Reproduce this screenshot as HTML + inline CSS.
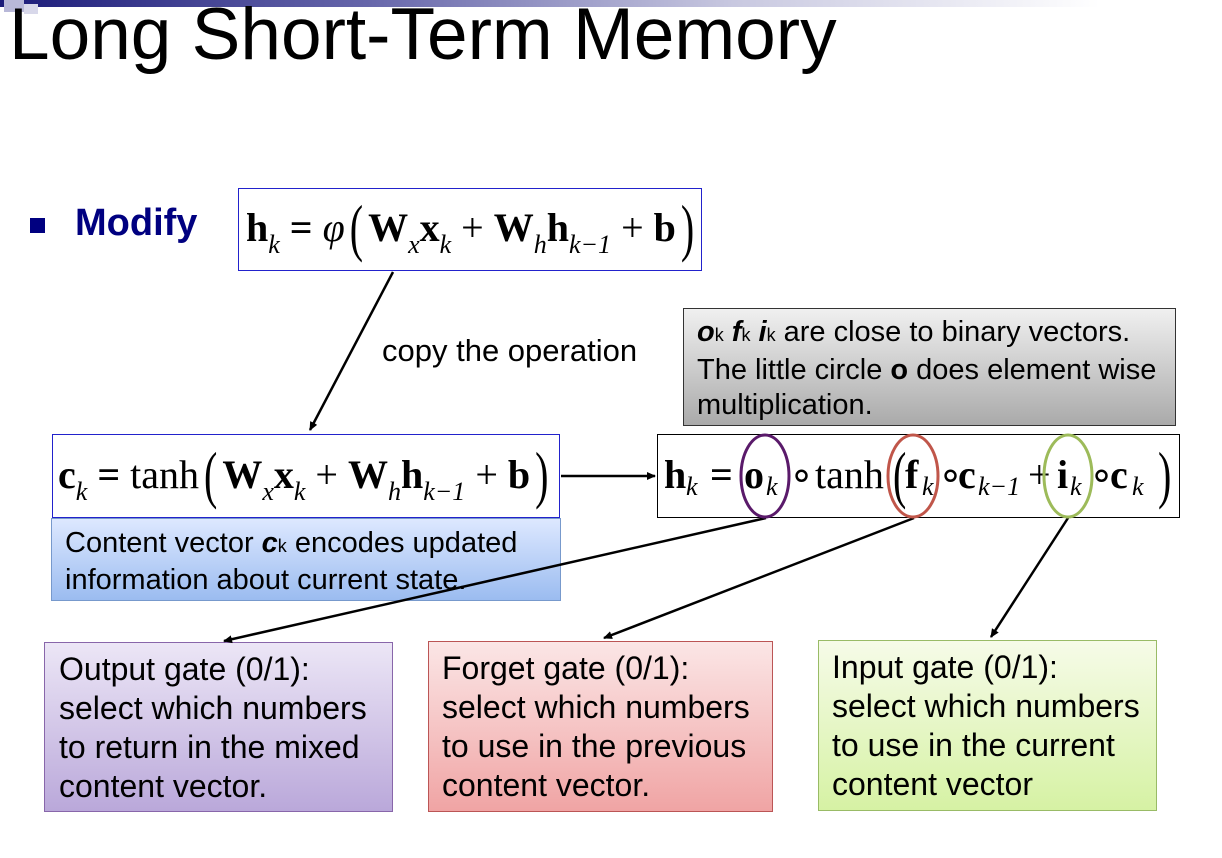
<!DOCTYPE html>
<html><head><meta charset="utf-8"><style>
body{margin:0;width:1222px;height:858px;background:#fff;position:relative;overflow:hidden;font-family:"Liberation Sans",sans-serif;}
.a{position:absolute;}
.box{position:absolute;box-sizing:border-box;}
.m{font-family:"Liberation Serif",serif;font-size:40px;white-space:nowrap;position:absolute;line-height:1;}
.m b{font-weight:bold;}
.m sub{font-style:italic;font-size:26px;vertical-align:-12px;}
.m .p{display:inline-block;transform:scaleY(1.6);font-size:40px;margin:0 5px;}
.q{position:absolute;font-family:"Liberation Serif",serif;font-size:40px;line-height:1;top:455px;white-space:nowrap;}
.q.s{font-style:italic;font-size:26px;top:474px;}
.q.pp{transform:scaleY(1.6);}
.t{font-size:32px;line-height:39px;color:#000;}
</style></head><body>
<div class="a" style="left:0;top:0;width:1222px;height:7px;background:linear-gradient(90deg,#1c1c7a 0%,#6666aa 30%,#c8c8e0 60%,#fff 90%);"></div>
<div class="a" style="left:4px;top:0;width:20px;height:12px;background:#b8b8d8;"></div>
<div class="a" style="left:24px;top:4px;width:14px;height:10px;background:#d8d8ea;"></div>
<div class="a" style="left:9px;top:-7px;font-size:73px;">Long Short-Term Memory</div>

<div class="a" style="left:30px;top:218px;width:15px;height:15px;background:#000080;"></div>
<div class="a" style="left:75px;top:202px;font-size:38px;font-weight:bold;color:#000080;">Modify</div>

<div class="box" style="left:238px;top:188px;width:464px;height:83px;border:1.5px solid #2222cc;"></div>
<div class="m" style="left:246px;top:208px;"><b>h</b><sub>k</sub> <b>=</b> <i>φ</i><span class="p">(</span><b>W</b><sub>x</sub><b>x</b><sub>k</sub> + <b>W</b><sub>h</sub><b>h</b><sub>k−1</sub> + <b>b</b><span class="p">)</span></div>

<div class="a t" style="left:382px;top:331px;font-size:31px;">copy the operation</div>

<div class="box" style="left:683px;top:308px;width:493px;height:118px;border:1.5px solid #333;background:linear-gradient(#f0f0f0,#aaa);padding:6px 0 0 13px;font-size:29px;line-height:35px;">
<b><i>o</i></b><span style="font-size:18px">k</span> <b><i>f</i></b><span style="font-size:18px">k</span> <b><i>i</i></b><span style="font-size:18px">k</span> are close to binary vectors.<br>The little circle <b>o</b> does element wise<br>multiplication.</div>

<div class="box" style="left:52px;top:434px;width:508px;height:84px;border:1.5px solid #2222cc;"></div>
<div class="m" style="left:58px;top:455px;"><b>c</b><sub>k</sub> <b>=</b> tanh<span class="p">(</span><b>W</b><sub>x</sub><b>x</b><sub>k</sub> + <b>W</b><sub>h</sub><b>h</b><sub>k−1</sub> + <b>b</b><span class="p">)</span></div>
<div class="box" style="left:51px;top:518px;width:510px;height:83px;border:1px solid #7799cc;background:linear-gradient(#dde8ff,#9bbcf0);padding:7px 0 0 13px;font-size:29px;line-height:34px;">Content vector <b><i>c</i></b><span style="font-size:18px">k</span> encodes updated<br>information about current state.</div>

<div class="box" style="left:657px;top:434px;width:523px;height:84px;border:1.5px solid #000;"></div>
<b class="q" style="left:664px">h</b><span class="q s" style="left:686px">k</span>
<b class="q" style="left:710px">=</b>
<b class="q" style="left:744px">o</b><span class="q s" style="left:766px">k</span>
<span class="q" style="left:789px">∘</span>
<span class="q" style="left:815px">tanh</span>
<span class="q pp" style="left:893px">(</span>
<b class="q" style="left:905px">f</b><span class="q s" style="left:922px">k</span>
<span class="q" style="left:938px">∘</span>
<b class="q" style="left:958px">c</b><span class="q s" style="left:978px">k−1</span>
<span class="q" style="left:1028px">+</span>
<b class="q" style="left:1057px">i</b><span class="q s" style="left:1070px">k</span>
<span class="q" style="left:1089px">∘</span>
<b class="q" style="left:1110px">c</b><span class="q s" style="left:1132px">k</span>
<span class="q pp" style="left:1158px">)</span>

<div class="box t" style="left:44px;top:642px;width:349px;height:170px;border:1px solid #8866aa;background:linear-gradient(#ece6f6,#baa8da);padding:7px 0 0 14px;">Output gate (0/1):<br>select which numbers<br>to return in the mixed<br>content vector.</div>
<div class="box t" style="left:428px;top:641px;width:345px;height:171px;border:1px solid #bb5555;background:linear-gradient(#fbe6e6,#f0a4a4);padding:7px 0 0 13px;">Forget gate (0/1):<br>select which numbers<br>to use in the previous<br>content vector.</div>
<div class="box t" style="left:818px;top:640px;width:339px;height:171px;border:1px solid #99bb66;background:linear-gradient(#f6fbe8,#d6f2a4);padding:7px 0 0 13px;">Input gate (0/1):<br>select which numbers<br>to use in the current<br>content vector</div>

<svg class="a" style="left:0;top:0" width="1222" height="858">
<defs><marker id="ar" markerWidth="10" markerHeight="10" refX="8" refY="5" orient="auto" markerUnits="userSpaceOnUse"><path d="M0,1 L9,5 L0,9z" fill="#000"/></marker></defs>
<g stroke="#000" stroke-width="2.5" fill="none">
<line x1="393" y1="272" x2="310" y2="430" marker-end="url(#ar)"/>
<line x1="561" y1="476" x2="655" y2="476" marker-end="url(#ar)"/>
<line x1="766" y1="518" x2="224" y2="641" marker-end="url(#ar)"/>
<line x1="914" y1="518" x2="604" y2="638" marker-end="url(#ar)"/>
<line x1="1068" y1="518" x2="991" y2="637" marker-end="url(#ar)"/>
</g>
<ellipse cx="765" cy="476" rx="24" ry="41" stroke="#5a1a6a" stroke-width="3" fill="none"/>
<ellipse cx="913" cy="476" rx="25" ry="41" stroke="#c0564a" stroke-width="3" fill="none"/>
<ellipse cx="1068" cy="476" rx="24" ry="41" stroke="#9dbb5a" stroke-width="3" fill="none"/>
</svg>
</body></html>
